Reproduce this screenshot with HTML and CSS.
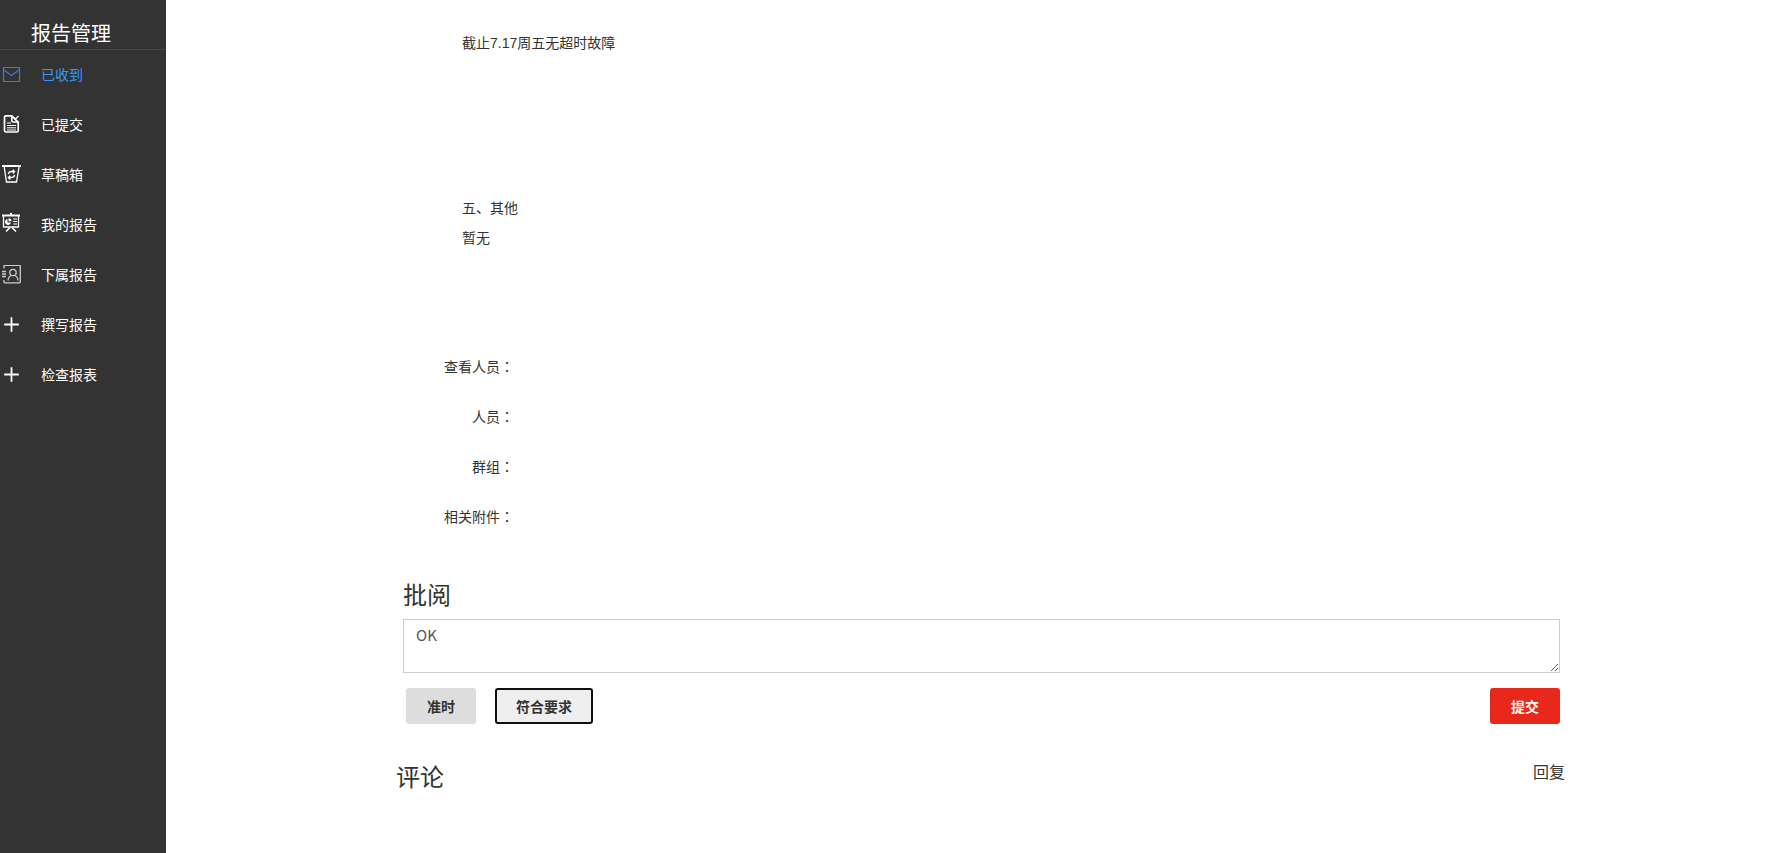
FILE: index.html
```
<!DOCTYPE html>
<html lang="zh-CN">
<head>
    <meta charset="UTF-8">
    <meta name="viewport" content="width=device-width, initial-scale=1.0">
    <title>报告管理</title>
    <link rel="stylesheet" href="styles.css">
</head>
<body>
    <!-- Sidebar -->
    <aside class="sidebar">
        <div class="sidebar-title">报告管理</div>
        <nav class="menu">
            <a href="#" class="menu-item active">
                <svg class="menu-icon" viewBox="0 0 20 20" fill="none" stroke="currentColor">
                    <path stroke-width="1.200" d="M1.500 2.500h16v14h-16z"/>
                    <path stroke-width="1.200" d="M2 5l7.500 5.500L17 5"/>
                </svg>
                <span>已收到</span>
            </a>
            <a href="#" class="menu-item">
                <svg class="menu-icon" viewBox="1 1 20 20" fill="none" stroke="currentColor">
                    <path stroke-width="1.700" d="M10.500 1.800H5Q3.500 1.800 3.500 3.300v13.200Q3.500 18 5 18h11q1.200 0 1.200-1.200V8h-5q-1.400 0-1.400-1.500V1.800l6 6"/>
                    <path d="M13 3.500l1.500 1.500 3-3" stroke-width="1.200"/>
                    <path d="M6 9h4M6 11.500h9M6 13.800h9M6 16h9"/>
                </svg>
                <span>已提交</span>
            </a>
            <a href="#" class="menu-item">
                <svg class="menu-icon" viewBox="0 1 20 20" fill="none" stroke="currentColor">
                    <path stroke-width="2" d="M0 2h19"/>
                    <path stroke-width="1.300" d="M2.200 3l2.300 15h10L17 3"/>
                    <path stroke-width="1.300" d="M6.300 10Q7 7.500 9.500 7.500h3M10.800 5.800l1.800 1.700-1.800 2M12.700 11Q12 13.500 9.500 13.500h-3M8.200 11.700l-1.800 1.800 1.800 2"/>
                </svg>
                <span>草稿箱</span>
            </a>
            <a href="#" class="menu-item">
                <svg class="menu-icon raised" viewBox="1 1 20 20" fill="none" stroke="currentColor">
                    <path stroke-width="2" d="M10 0v3.500M1 3.500h18"/>
                    <path stroke-width="1.300" d="M2.500 4v11h15V4"/>
                    <path stroke-width="1.600" d="M9 15.500l-4 4M11 15.500l4 4"/>
                    <path d="M6.500 7v3.500H10A3 3 0 1 1 6.500 7z" fill="currentColor" stroke="none"/>
                    <path d="M7.500 6.200a3 3 0 0 1 3 3h-3z" fill="currentColor" stroke="none"/>
                    <path stroke-width="1.200" d="M12.200 7H16M12.200 9.500H16M12.200 12H16"/>
                </svg>
                <span>我的报告</span>
            </a>
            <a href="#" class="menu-item">
                <svg class="menu-icon dim" viewBox="1 1 20 20" fill="none" stroke="currentColor">
                    <path stroke-width="1.300" d="M3 4.500V2Q3 1.300 4 1.300h14.500q.8 0 .8.800v16q0 .8-.8.800H4q-1 0-1-.8V16"/>
                    <path stroke-width="1.300" d="M1 7.500h4M1 10h4M1 12.500h4"/>
                    <circle cx="12" cy="8.500" r="3.200" stroke-width="1.300"/>
                    <path stroke-width="1.300" d="M7 16.500q.3-4 3.500-5M17 16.500q-.3-4-3.500-5"/>
                </svg>
                <span>下属报告</span>
            </a>
            <a href="#" class="menu-item">
                <svg class="menu-icon" viewBox="0 0 20 20" fill="none" stroke="currentColor">
                    <path stroke-width="1.800" d="M9.500 2.200v14.600M2.200 9.500h14.600"/>
                </svg>
                <span>撰写报告</span>
            </a>
            <a href="#" class="menu-item">
                <svg class="menu-icon" viewBox="0 0 20 20" fill="none" stroke="currentColor">
                    <path stroke-width="1.800" d="M9.500 2.200v14.600M2.200 9.500h14.600"/>
                </svg>
                <span>检查报表</span>
            </a>
        </nav>
    </aside>

    <main class="main">
        <div class="container">
            <!-- Report content -->
            <section class="report">
                <p class="report-fault">截止7.17周五无超时故障</p>
                <p>五、其他</p>
                <p>暂无</p>
            </section>

            <!-- Report info -->
            <dl class="info">
                <dt>查看人员<span class="colon" lang="zh-TW">：</span></dt><dd></dd>
                <dt>人员<span class="colon" lang="zh-TW">：</span></dt><dd></dd>
                <dt>群组<span class="colon" lang="zh-TW">：</span></dt><dd></dd>
                <dt>相关附件<span class="colon" lang="zh-TW">：</span></dt><dd></dd>
            </dl>

            <!-- Review -->
            <form class="review">
                <label class="heading" for="review-text">批阅</label>
                <textarea id="review-text">OK</textarea>
                <div class="review-actions">
                    <button type="button" class="btn">准时</button>
                    <button type="button" class="btn selected">符合要求</button>
                    <button type="submit" class="btn btn-submit">提交</button>
                </div>
            </form>

            <!-- Comments -->
            <section class="comments">
                <h2 class="heading">评论</h2>
                <a href="#" class="reply">回复</a>
            </section>
        </div>
    </main>
</body>
</html>
```
FILE: styles.css
```
* {
    box-sizing: border-box;
}
body {
    display: flex;
    min-height: 100vh;
    margin: 0;
    font-family: "Liberation Sans", "Noto Sans CJK SC", sans-serif;
    font-size: 14px;
    color: #333;
    background-color: #fff;
}
/* Sidebar */
.sidebar {
    flex: 0 0 166px;
    background-color: #333;
    color: #fff;
}
.sidebar-title {
    height: 50px;
    padding: 20px 0 0 31px;
    border-bottom: 1px solid #484848;
    font-size: 20px;
    line-height: 28px;
}
.menu-item {
    display: flex;
    align-items: center;
    gap: 19px;
    height: 50px;
    padding-left: 2px;
    color: #fff;
    text-decoration: none;
}
.menu-item span {
    padding-bottom: 2px;
}
.menu-item.active {
    color: #3399ff;
}
.menu-icon {
    width: 20px;
    height: 20px;
}
.active .menu-icon {
    color: #3380cc;
}
.menu-icon.raised {
    margin-bottom: 4px;
}
.menu-icon.dim {
    color: #ccc;
}
/* Main area */
.main {
    flex: 1;
    padding-left: 23px;
}
.container {
    max-width: 1170px;
    margin: 0 auto;
}
.report {
    padding: 28px 66px 0;
}
.report p {
    margin: 0;
    line-height: 30px;
}
.report .report-fault {
    margin-bottom: 135px;
}
.info {
    display: grid;
    grid-template-columns: 118px 1fr;
    grid-auto-rows: 50px;
    margin: 88px 0 37px;
    line-height: 50px;
}
.info dt {
    text-align: right;
}
.info dd {
    margin: 0;
}
/* This face centers the full-width colon */
.colon {
    font-family: "Noto Sans CJK TC", sans-serif;
}
.heading {
    display: block;
    margin: 0;
    font-size: 24px;
    font-weight: 400;
    line-height: 36px;
}
/* Review form */
.review {
    padding: 0 6px 0 7px;
}
.review textarea {
    display: block;
    width: 100%;
    height: 54px;
    margin-top: 5px;
    padding: 5px 12px;
    border: 1px solid #ccc;
    font-family: "Noto Sans CJK SC", sans-serif;
    font-size: 15px;
    line-height: 20px;
    color: #555;
}
.review-actions {
    display: flex;
    gap: 19px;
    margin-top: 15px;
    padding-left: 3px;
}
.btn {
    height: 36px;
    padding: 0 19px;
    border: 2px solid #ddd;
    border-radius: 3px;
    background-color: #ddd;
    color: #333;
    font-family: inherit;
    font-size: 14px;
    font-weight: 700;
    cursor: pointer;
}
.btn.selected {
    border-color: #101010;
    background-color: #eee;
}
.btn-submit {
    margin-left: auto;
    border-color: #e8281a;
    background-color: #e8281a;
    color: #fff;
}
/* Comments */
.comments {
    display: flex;
    justify-content: space-between;
    margin-top: 36px;
}
.reply {
    padding-right: 1px;
    font-size: 16px;
    line-height: 26px;
    color: #333;
    text-decoration: none;
}
```
